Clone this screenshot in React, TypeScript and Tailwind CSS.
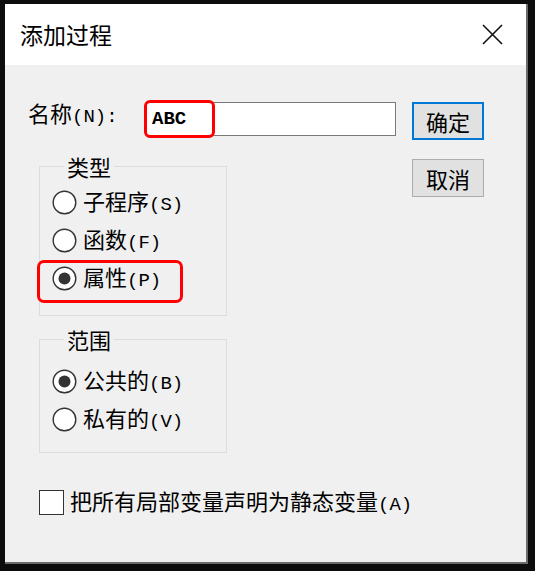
import React from 'react';

const cjk = { fontFamily: '"Noto Sans CJK SC", "Noto Sans", sans-serif' };

const Label = ({ text, hot }: { text: string; hot: string }) => (
  <span className="text-[22px] leading-[26px] text-black whitespace-nowrap" style={cjk}>
    {text}
    <span className="text-[19px] font-['Liberation_Mono',monospace]">({hot})</span>
  </span>
);

const Radio = ({ checked }: { checked?: boolean }) => (
  <svg width="25" height="25" viewBox="0 0 25 25" className="shrink-0">
    <circle cx="12.5" cy="12.5" r="11.3" fill="#fff" stroke="#333" strokeWidth="1.4" />
    {checked && <circle cx="12.5" cy="12.5" r="6" fill="#333" />}
  </svg>
);

const RadioRow = ({ text, hot, checked }: { text: string; hot: string; checked?: boolean }) => (
  <div className="h-[38px] flex items-center gap-[6px]">
    <Radio checked={checked} />
    <Label text={text} hot={hot} />
  </div>
);

const Group = ({ title, children, className }: { title: string; children: React.ReactNode; className?: string }) => (
  <fieldset className={`w-[188px] border border-[#dcdcdc] pl-[12px] ${className ?? ''}`}>
    <legend className="ml-[12px] px-[3px] text-[22px] leading-[26px] text-black" style={cjk}>
      {title}
    </legend>
    {children}
  </fieldset>
);

export default function App() {
  return (
    <div className="w-[535px] h-[571px] bg-[#0d0d0d] pt-[4px] pl-[5px] pr-[7px] pb-[7px]">
      <div className="w-full h-full flex flex-col bg-[#f0f0f0] border-r-2 border-b-2 border-[#6b6b6b]">
        <div className="h-[61px] bg-white flex items-center justify-between pl-[15px] pr-[23px]">
          <span className="text-[23px] text-black" style={cjk}>添加过程</span>
          <svg width="21" height="21" viewBox="0 0 21 21">
            <path d="M1 1L20 20M20 1L1 20" stroke="#111" strokeWidth="1.6" />
          </svg>
        </div>

        <div className="flex flex-col pl-[23px] pt-[37px]">
          <div className="flex">
            <div className="flex flex-col">
              <div className="flex items-center h-[34px]">
                <span className="w-[118px] text-[22px] leading-[26px] text-black whitespace-nowrap -mt-[9px]" style={cjk}>
                  名称<span className="text-[19px] font-['Liberation_Mono',monospace]">(N):</span>
                </span>
                <div className="relative w-[250px] h-[34px] bg-white border border-[#7a7a7a] flex items-center pl-[5px]">
                  <span className="text-[19px] font-semibold font-['Liberation_Mono',monospace] text-black">ABC</span>
                  <div className="absolute -left-[3px] -top-[3px] w-[71px] h-[38px] border-[3px] border-[#ff0000] rounded-[6px]" />
                </div>
              </div>

              <Group title="类型" className="ml-[11px] mt-[17px] pt-[4px] pb-[18px]">
                <RadioRow text="子程序" hot="S" />
                <RadioRow text="函数" hot="F" />
                <div className="relative">
                  <RadioRow text="属性" hot="P" checked />
                  <div className="absolute -left-[15px] top-[1px] w-[146px] h-[43px] border-[3px] border-[#ff0000] rounded-[7px]" />
                </div>
              </Group>

              <Group title="范围" className="ml-[11px] mt-[10px] pt-[10px] pb-[14px]">
                <RadioRow text="公共的" hot="B" checked />
                <RadioRow text="私有的" hot="V" />
              </Group>
            </div>

            <div className="flex flex-col gap-[19px] ml-[16px]">
              <button className="w-[72px] h-[38px] bg-[#e1e1e1] border-2 border-[#0078d7] text-[22px] text-black flex items-center justify-center" style={cjk}>
                确定
              </button>
              <button className="w-[72px] h-[38px] bg-[#e1e1e1] border border-[#adadad] text-[22px] text-black flex items-center justify-center" style={cjk}>
                取消
              </button>
            </div>
          </div>

          <div className="ml-[11px] mt-[30px] h-[38px] flex items-center gap-[6px]">
            <div className="w-[25px] h-[25px] bg-white border-[1.5px] border-[#333] shrink-0" />
            <Label text="把所有局部变量声明为静态变量" hot="A" />
          </div>
        </div>
      </div>
    </div>
  );
}
